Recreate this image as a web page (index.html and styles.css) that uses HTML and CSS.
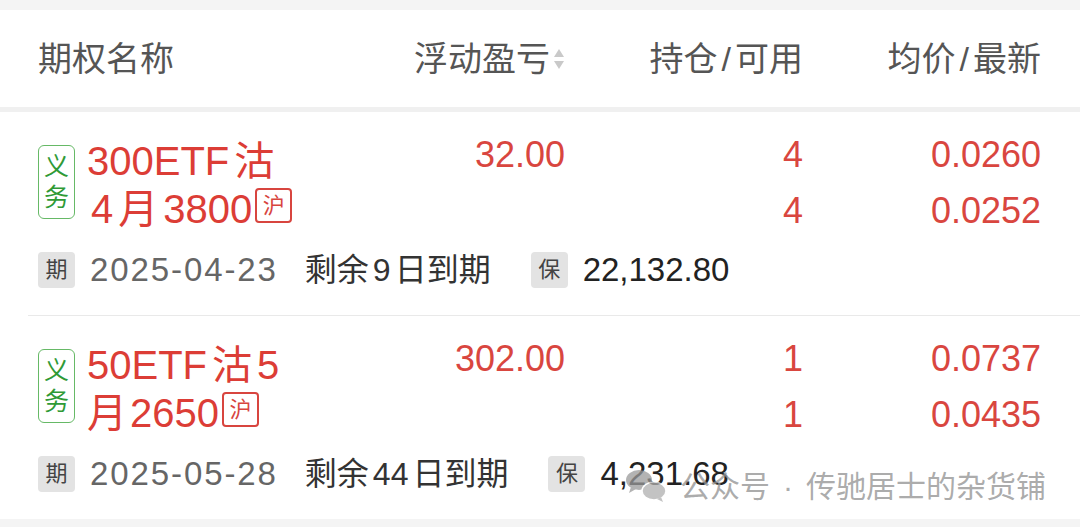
FILE: index.html
```html
<!DOCTYPE html>
<html lang="zh-CN">
<head>
<meta charset="utf-8">
<title>期权持仓</title>
<link rel="stylesheet" href="styles.css">
</head>
<body>
<div class="top-strip"></div>
<div class="header cols">
  <div class="h-name">期权名称</div>
  <div class="h-col h-pnl">浮动盈亏<svg class="sort" width="12" height="22" viewBox="0 0 12 22"><path d="M6 1 L11 9 L1 9 Z" fill="#c9c9c9"/><path d="M1 13 L11 13 L6 21 Z" fill="#c9c9c9"/></svg></div>
  <div class="h-col">持仓<span class="slash">/</span>可用</div>
  <div class="h-col">均价<span class="slash">/</span>最新</div>
</div>
<div class="divider"></div>

<div class="row">
  <div class="row-main cols">
    <div class="name-cell">
      <div class="duty"><span>义</span><span>务</span></div>
      <div class="name">
        <div class="name-line">300ETF<span class="cj">沽</span></div>
        <div class="name-line indent">4<span class="cj">月</span>3800<span class="exch">沪</span></div>
      </div>
    </div>
    <div class="num-cell"><div>32.00</div></div>
    <div class="num-cell"><div>4</div><div>4</div></div>
    <div class="num-cell"><div>0.0260</div><div>0.0252</div></div>
  </div>
  <div class="row-info">
    <span class="tag">期</span>
    <span class="date">2025-04-23</span>
    <span class="remain">剩余<span class="rd">9</span>日到期</span>
    <span class="tag tag-bao">保</span>
    <span class="amount">22,132.80</span>
  </div>
</div>
<div class="sep"></div>
<div class="row">
  <div class="row-main cols">
    <div class="name-cell">
      <div class="duty"><span>义</span><span>务</span></div>
      <div class="name">
        <div class="name-line">50ETF<span class="cj">沽</span>5</div>
        <div class="name-line">月<span class="lat">2650</span><span class="exch">沪</span></div>
      </div>
    </div>
    <div class="num-cell"><div>302.00</div></div>
    <div class="num-cell"><div>1</div><div>1</div></div>
    <div class="num-cell"><div>0.0737</div><div>0.0435</div></div>
  </div>
  <div class="row-info">
    <span class="tag">期</span>
    <span class="date">2025-05-28</span>
    <span class="remain">剩余<span class="rd">44</span>日到期</span>
    <span class="tag tag-bao">保</span>
    <span class="amount">4,231.68</span>
  </div>
</div>
<div class="bottom-strip"></div>

<div class="watermark">
  <svg class="wm-icon" width="44" height="34" viewBox="0 0 44 34"><ellipse cx="15" cy="11" rx="13" ry="10" fill="#9a9a9a"/><path d="M7 18 L5 24 L12 20 Z" fill="#9a9a9a"/><ellipse cx="30" cy="22" rx="12" ry="9" fill="#b0b0b0" stroke="#fff" stroke-width="1.5"/><path d="M37 28 L39 33 L33 30 Z" fill="#b0b0b0"/></svg>
  <span class="wm-text">公众号<span class="wm-dot">·</span>传驰居士的杂货铺</span>
</div>
</body>
</html>
```

FILE: styles.css
```css
html, body {
  margin: 0;
  padding: 0;
}
body {
  width: 1080px;
  height: 527px;
  overflow: hidden;
  position: relative;
  background: #fff;
  font-family: "Liberation Sans", "Noto Sans CJK SC", sans-serif;
}
.top-strip {
  height: 10px;
  background: #f4f4f4;
}
.cols {
  display: grid;
  grid-template-columns: 1fr 238px 238px 238px;
  padding: 0 39px 0 38px;
}
.header {
  height: 97px;
  align-items: center;
  font-size: 34px;
  line-height: 40px;
  color: #555;
}
.h-col {
  text-align: right;
}
.slash {
  margin: 0 4px;
}
.h-pnl {
  display: flex;
  justify-content: flex-end;
  align-items: center;
}
.sort {
  margin-left: 3px;
}
.divider {
  height: 5px;
  background: #f0f0f0;
}
.row {
  height: 203px;
  box-sizing: border-box;
  padding-top: 15px;
}
.sep {
  height: 1px;
  margin-left: 28px;
  background: #e9e9e9;
}
.bottom-strip {
  height: 8px;
  background: #f4f4f4;
}
.row-main {
  height: 112px;
  align-items: start;
}
.name-cell {
  display: flex;
  align-items: flex-start;
}
.duty {
  margin-top: 18px;
  width: 37px;
  height: 74px;
  box-sizing: border-box;
  border: 1.5px solid #66b966;
  border-radius: 6px;
  display: flex;
  flex-direction: column;
  align-items: center;
  justify-content: center;
  font-size: 25px;
  line-height: 31px;
  color: #2f9a36;
}
.name {
  margin-left: 12px;
  padding-top: 10px;
  font-size: 40px;
  line-height: 48px;
  color: #dc3d36;
  white-space: nowrap;
}
.indent {
  padding-left: 4px;
}
.cj {
  margin: 0 5px;
}
.lat {
  margin-left: 3px;
}
.exch {
  display: inline-block;
  vertical-align: top;
  margin-top: 3px;
  margin-left: 3px;
  width: 37px;
  height: 35px;
  box-sizing: border-box;
  border: 2px solid #d8453f;
  border-radius: 4px;
  font-size: 22px;
  line-height: 31px;
  text-align: center;
  color: #d8453f;
}
.num-cell {
  text-align: right;
  font-size: 36px;
  line-height: 56px;
  color: #d9463f;
}
.row-info {
  margin-top: 13px;
  height: 36px;
  display: flex;
  align-items: center;
  padding-left: 38px;
  font-size: 32px;
  line-height: 36px;
}
.tag {
  width: 37px;
  height: 36px;
  border-radius: 4px;
  background: #e3e3e3;
  color: #444;
  font-size: 22px;
  line-height: 36px;
  text-align: center;
}
.date {
  margin-left: 15px;
  color: #666;
  font-size: 33px;
  letter-spacing: 1.9px;
}
.remain {
  margin-left: 27px;
  color: #333;
}
.rd {
  margin: 0 4px;
}
.tag-bao {
  margin-left: 40px;
}
.amount {
  margin-left: 15px;
  color: #222;
  font-size: 33px;
}
.watermark {
  position: absolute;
  left: 624px;
  top: 466px;
  display: flex;
  align-items: center;
  pointer-events: none;
}
.wm-icon {
  opacity: 0.75;
}
.wm-text {
  margin-left: 12px;
  font-size: 30px;
  line-height: 36px;
  color: rgba(150, 150, 150, 0.8);
  font-family: "Noto Sans CJK SC", sans-serif;
}
.wm-dot {
  font-family: "Liberation Sans", sans-serif;
  margin: 0 13px;
}
```
